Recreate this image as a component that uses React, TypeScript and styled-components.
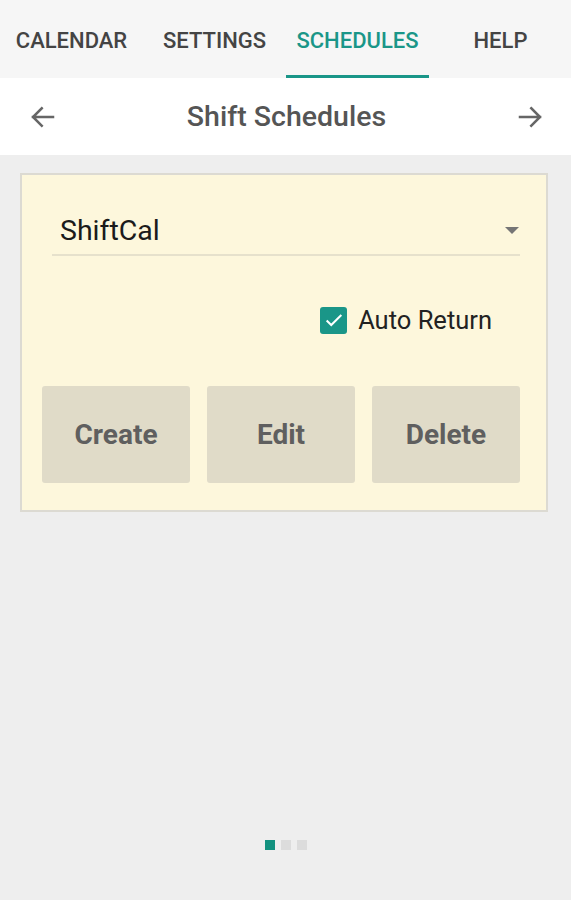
import { createGlobalStyle } from 'styled-components';
import styled from 'styled-components';

const Global = createGlobalStyle`
  html, body { margin: 0; padding: 0; }
  body { font-family: Roboto, "Noto Sans", sans-serif; background: #eeeeee; }
`;

const Screen = styled.div`
  width: 571px;
  height: 900px;
  display: flex;
  flex-direction: column;
  background: #eeeeee;
  overflow: hidden;
`;

const TabBar = styled.div`
  height: 78px;
  display: grid;
  grid-template-columns: repeat(4, 143px);
  background: #f6f6f6;
`;

const Tab = styled.div<{ $active?: boolean }>`
  display: flex;
  align-items: center;
  justify-content: center;
  font-size: 22px;
  font-weight: 500;
  color: ${p => (p.$active ? '#1a9688' : '#444444')};
  border-bottom: 3px solid ${p => (p.$active ? '#1a9688' : 'transparent')};
  padding-top: 5px;
`;

const Header = styled.div`
  height: 77px;
  background: #ffffff;
  display: flex;
  align-items: center;
  justify-content: space-between;
  padding: 0 26px 0 28px;
`;

const Title = styled.div`
  font-size: 28.5px;
  font-weight: 500;
  color: #555555;
`;

const Body = styled.div`
  flex: 1;
  display: flex;
  flex-direction: column;
  align-items: center;
  padding: 18px 23px 0 20px;
`;

const Card = styled.div`
  width: 100%;
  box-sizing: border-box;
  background: #fdf7dc;
  border: 2px solid #dcdad2;
  padding: 31px 26px 27px 20px;
`;

const Dropdown = styled.div`
  display: flex;
  align-items: center;
  justify-content: space-between;
  height: 48px;
  margin-left: 10px;
  border-bottom: 2px solid #e6e1cc;
  padding: 0 0 0 8px;
`;

const DropText = styled.span`
  font-size: 28.5px;
  color: #1b1b1b;
`;

const Caret = styled.span`
  width: 0;
  height: 0;
  border-left: 7px solid transparent;
  border-right: 7px solid transparent;
  border-top: 7px solid #757575;
  margin-right: 1px;
`;

const CheckRow = styled.div`
  display: flex;
  justify-content: flex-end;
  align-items: center;
  gap: 11px;
  padding-right: 28px;
  margin-top: 49px;
`;

const Box = styled.span`
  width: 27px;
  height: 27px;
  border-radius: 3px;
  background: #1a9688;
  display: flex;
  align-items: center;
  justify-content: center;
`;

const CheckLabel = styled.span`
  font-size: 25.5px;
  color: #222222;
`;

const Buttons = styled.div`
  display: grid;
  grid-template-columns: repeat(3, 148px);
  gap: 17px;
  margin-top: 51px;
`;

const Btn = styled.button`
  height: 97px;
  border: none;
  border-radius: 3px;
  background: #e0dbc8;
  font-family: Roboto, "Noto Sans", sans-serif;
  font-size: 28px;
  font-weight: 700;
  color: #5f5f5f;
  padding: 0;
`;

const Dots = styled.div`
  margin-top: auto;
  margin-bottom: 50px;
  display: flex;
  gap: 6px;
  padding-left: 3px;
`;

const Dot = styled.span<{ $active?: boolean }>`
  width: 10px;
  height: 10px;
  background: ${p => (p.$active ? '#13917f' : '#dcdcdc')};
`;

const Arrow = ({ dir }: { dir: 'left' | 'right' }) => (
  <svg width="30" height="30" viewBox="0 0 24 24" fill="none">
    <path
      d={dir === 'left' ? 'M20 12H4M11 5l-7 7 7 7' : 'M4 12h16M13 5l7 7-7 7'}
      stroke="#666"
      strokeWidth="2"
      strokeLinecap="square"
    />
  </svg>
);

export default function App() {
  return (
    <Screen>
      <Global />
      <TabBar>
        <Tab>CALENDAR</Tab>
        <Tab>SETTINGS</Tab>
        <Tab $active>SCHEDULES</Tab>
        <Tab>HELP</Tab>
      </TabBar>
      <Header>
        <Arrow dir="left" />
        <Title>Shift Schedules</Title>
        <Arrow dir="right" />
      </Header>
      <Body>
        <Card>
          <Dropdown>
            <DropText>ShiftCal</DropText>
            <Caret />
          </Dropdown>
          <CheckRow>
            <Box>
              <svg width="22" height="22" viewBox="0 0 24 24" fill="none">
                <path d="M4 12.5l5 5L20 6.5" stroke="#fff" strokeWidth="2.2" />
              </svg>
            </Box>
            <CheckLabel>Auto Return</CheckLabel>
          </CheckRow>
          <Buttons>
            <Btn>Create</Btn>
            <Btn>Edit</Btn>
            <Btn>Delete</Btn>
          </Buttons>
        </Card>
        <Dots>
          <Dot $active />
          <Dot />
          <Dot />
        </Dots>
      </Body>
    </Screen>
  );
}
